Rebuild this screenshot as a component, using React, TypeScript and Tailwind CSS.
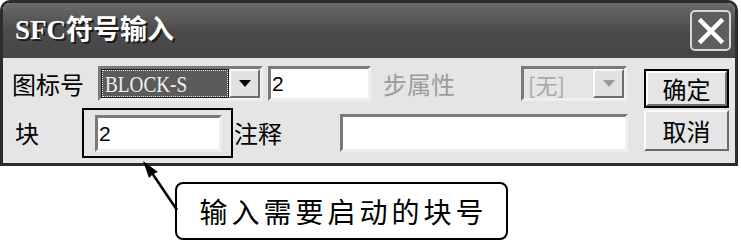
const cjk = "font-['Noto_Sans_CJK_SC',sans-serif]";

const Triangle = ({ color }: { color: string }) => (
  <svg width="12" height="7" viewBox="0 0 12 7">
    <polygon points="0,0 12,0 6,7" fill={color} />
  </svg>
);

// classic windows sunken edit field
const Field = ({ w, h, value }: { w: string; h: string; value?: string }) => (
  <div
    className={`${w} ${h} flex items-center border-[3px] border-t-[#7a7a7a] border-l-[#7a7a7a] border-r-[#efefef] border-b-[#efefef] bg-white pl-[1px]`}
  >
    <span className="font-['Liberation_Sans',sans-serif] text-[21px] leading-none text-black">{value}</span>
  </div>
);

const DropButton = ({ color }: { color: string }) => (
  <div className="flex h-full w-[31px] items-center justify-center border-2 border-t-[#fbfbfb] border-l-[#fbfbfb] border-r-[#6e6e6e] border-b-[#6e6e6e] bg-[#e2e2e2]">
    <Triangle color={color} />
  </div>
);

const Dialog = () => {
  return (
    <div className="w-[738px] overflow-hidden rounded-t-[10px] border-[3px] border-[#2c2c2c]">
      {/* title bar */}
      <div className="flex h-[55px] items-center justify-between bg-gradient-to-b from-[#6a6a6a] via-[#4c4c4c] to-[#454545] pl-[12px] pr-[4px]">
        <span className="font-['Liberation_Serif','Noto_Sans_CJK_SC',serif] text-[27px] font-bold leading-none text-white [text-shadow:2px_2px_0_#1c1c1c]">
          SFC符号输入
        </span>
        <div className="flex h-[41px] w-[41px] items-center justify-center rounded-[5px] border-2 border-[#d8d8d8] bg-[#5e5e5e]">
          <svg width="28" height="28" viewBox="0 0 28 28">
            <path d="M4 4 L24 24 M24 4 L4 24" stroke="#fff" strokeWidth="4.5" strokeLinecap="square" />
          </svg>
        </div>
      </div>

      {/* body */}
      <div className={`flex h-[105px] items-start bg-[#e5e5e5] pl-[9px] pt-[8px] ${cjk}`}>
        <div className="flex flex-col">
          {/* row 1 */}
          <div className="flex h-[35px] items-center">
            <span className="w-[86px] text-[24px] leading-none text-black">图标号</span>
            <div className="flex h-[35px] w-[165px] items-stretch border-[3px] border-t-[#7a7a7a] border-l-[#7a7a7a] border-r-[#efefef] border-b-[#efefef] bg-[#e5e5e5]">
              <div className="m-[1px] flex flex-1 items-center border border-dotted border-[#f2f2f2] bg-[#5b5b5b] outline outline-1 outline-[#1a1a1a] pl-[2px]">
                <span className="inline-block origin-left scale-x-80 font-['Liberation_Serif',serif] text-[24px] leading-none text-[#f0f0f0]">
                  BLOCK-S
                </span>
              </div>
              <DropButton color="#000" />
            </div>
            <div className="ml-[5px]">
              <Field w="w-[103px]" h="h-[35px]" value="2" />
            </div>
            <span className="ml-[12px] w-[138px] text-[24px] leading-none text-[#9c9c9c]">步属性</span>
            <div className="flex h-[35px] w-[106px] items-stretch border-[3px] border-t-[#7a7a7a] border-l-[#7a7a7a] border-r-[#efefef] border-b-[#efefef] bg-[#e5e5e5]">
              <div className="flex flex-1 items-center pl-[4px]">
                <span className="text-[22px] leading-none text-[#a8a8a8]">[无]</span>
              </div>
              <DropButton color="#9a9a9a" />
            </div>
          </div>

          {/* row 2 */}
          <div className="mt-[7px] flex h-[50px] items-center">
            <span className="w-[70px] pl-[3px] text-[24px] leading-none text-black">块</span>
            <div className="flex h-[50px] w-[151px] items-center border-2 border-black">
              <div className="ml-[11px]">
                <Field w="w-[127px]" h="h-[37px]" value="2" />
              </div>
            </div>
            <span className="w-[107px] pl-[1px] text-[24px] leading-none text-black">注释</span>
            <Field w="w-[288px]" h="h-[38px]" />
          </div>
        </div>

        {/* buttons */}
        <div className="ml-[16px] mt-[3px] flex w-[85px] flex-col">
          <div className="flex h-[39px] items-center justify-center border-2 border-black bg-[#e5e5e5]">
            <div className="flex h-full w-full items-center justify-center border-2 border-t-[#fbfbfb] border-l-[#fbfbfb] border-r-[#707070] border-b-[#707070] text-[24px] leading-none text-black">
              确定
            </div>
          </div>
          <div className="mt-[2px] flex h-[41px] items-center justify-center border-2 border-t-[#fbfbfb] border-l-[#fbfbfb] border-r-[#6a6a6a] border-b-[#6a6a6a] bg-[#e5e5e5] text-[24px] leading-none text-black">
            取消
          </div>
        </div>
      </div>
    </div>
  );
};

export default function App() {
  return (
    <div className="relative h-[243px] w-[741px] overflow-hidden bg-white">
      <Dialog />

      {/* callout */}
      <div className="ml-[175px] mt-[16px] flex h-[58px] w-[333px] items-center justify-center rounded-[8px] border-2 border-black bg-white">
        <span className="pl-[4px] font-['Noto_Sans_CJK_SC',sans-serif] text-[28px] leading-none tracking-[4px] text-black">
          输入需要启动的块号
        </span>
      </div>

      {/* arrow from callout to field */}
      <svg className="pointer-events-none absolute left-0 top-0" width="741" height="243" viewBox="0 0 741 243">
        <line x1="177" y1="210" x2="152" y2="173" stroke="#000" strokeWidth="2.5" />
        <polygon points="143,161 158,172 153,174 149,178" fill="#000" />
      </svg>
    </div>
  );
}
